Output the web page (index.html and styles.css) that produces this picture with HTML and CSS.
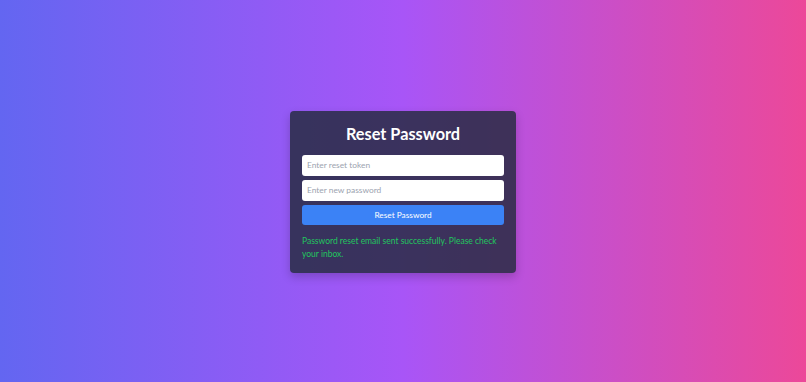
FILE: index.html
```html
<!DOCTYPE html>
<html lang="en">
<head>
    <meta charset="UTF-8">
    <meta name="viewport" content="width=device-width, initial-scale=1.0">
    <title>Reset Password</title>
    <link rel="stylesheet" href="styles.css">
</head>
<body>

<div class="reset-card">
    <h1 class="title">Reset Password</h1>
    <form class="reset-form">
        <input class="field" type="text" placeholder="Enter reset token">
        <input class="field" type="password" placeholder="Enter new password">
        <button class="submit-button" type="button">Reset Password</button>
    </form>
    <p class="message">Password reset email sent successfully. Please check your inbox.</p>
</div>

</body>
</html>
```

FILE: styles.css
```css
html, body {
    height: 100%;
}

body {
    margin: 0;
    display: flex;
    justify-content: center;
    align-items: center;
    background: linear-gradient(to right, #6366f1, #a855f7, #ec4899);
    font-family: Lato, "Noto Sans", sans-serif;
}

.reset-card {
    width: 202px;
    padding: 12px;
    background-color: rgba(31, 41, 55, 0.8);
    border-radius: 4px;
    box-shadow: 0 4px 10px rgba(0, 0, 0, 0.2);
    margin-top: 1px;
}

.title {
    margin: 0 0 11px;
    font-size: 16.3px;
    line-height: 21px;
    font-weight: bold;
    text-align: center;
    color: #ffffff;
}

.reset-form {
    display: flex;
    flex-direction: column;
    gap: 4px;
}

.field {
    box-sizing: border-box;
    height: 21px;
    width: 100%;
    padding: 0 5px;
    border: none;
    border-radius: 3px;
    background: #ffffff;
    font-family: inherit;
    font-size: 8.4px;
    color: #374151;
}

.field::placeholder {
    color: #9ca3af;
}

.submit-button {
    height: 20px;
    border: none;
    border-radius: 3px;
    background-color: #3b82f6;
    color: #ffffff;
    font-family: inherit;
    font-size: 8.3px;
    cursor: pointer;
}

.message {
    margin: 10px 0 0;
    font-size: 8.5px;
    line-height: 13px;
    color: #22c55e;
}
```
